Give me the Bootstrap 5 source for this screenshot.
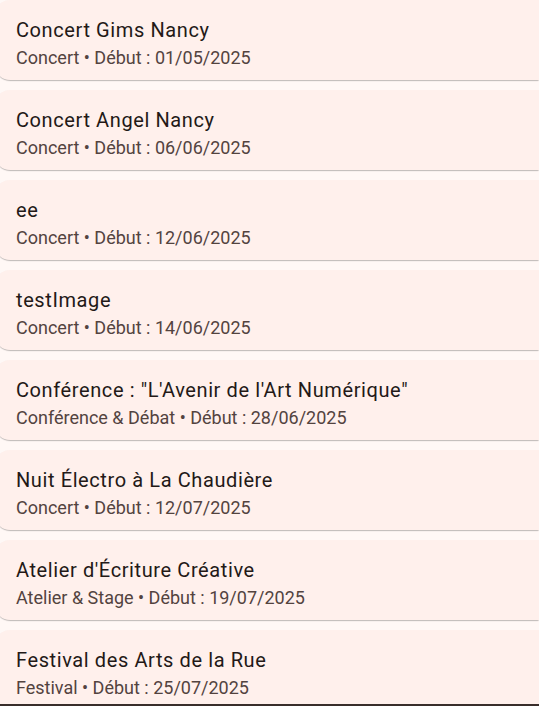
<!DOCTYPE html>
<html lang="fr">
<head>
<meta charset="utf-8">
<meta name="viewport" content="width=device-width, initial-scale=1">
<title>Événements</title>
<link href="https://cdn.jsdelivr.net/npm/bootstrap@5.3.0/dist/css/bootstrap.min.css" rel="stylesheet">
<style>
body { font-family: Roboto, sans-serif; background: #fff8f6; }
.events { height: 100vh; border-bottom: 2px solid #392e2b; }
.event-list { gap: 10px; }
.event { flex: none; margin-left: -5px; padding: 16px 16px 8px 21px; border-radius: 15px 0 0 15px; background: #fff0ec; box-shadow: 0 2px 1px -1px rgba(0,0,0,.12), 0 1px 1px rgba(0,0,0,.12), 0 1px 2px rgba(0,0,0,.04); }
.event-title { font-size: 20px; font-weight: 400; line-height: 28px; letter-spacing: .03em; font-kerning: normal; color: #231917; }
.event-info { font-size: 18px; line-height: 28px; color: #53433f; }
</style>
</head>
<body>
<main class="events overflow-hidden">
<ul class="event-list list-unstyled d-flex flex-column m-0">
<li class="event"><h2 class="event-title m-0">Concert Gims Nancy</h2><p class="event-info m-0">Concert • Début : 01/05/2025</p></li>
<li class="event"><h2 class="event-title m-0">Concert Angel Nancy</h2><p class="event-info m-0">Concert • Début : 06/06/2025</p></li>
<li class="event"><h2 class="event-title m-0">ee</h2><p class="event-info m-0">Concert • Début : 12/06/2025</p></li>
<li class="event"><h2 class="event-title m-0">testImage</h2><p class="event-info m-0">Concert • Début : 14/06/2025</p></li>
<li class="event"><h2 class="event-title m-0">Conférence : "L'Avenir de l'Art Numérique"</h2><p class="event-info m-0">Conférence &amp; Débat • Début : 28/06/2025</p></li>
<li class="event"><h2 class="event-title m-0">Nuit Électro à La Chaudière</h2><p class="event-info m-0">Concert • Début : 12/07/2025</p></li>
<li class="event"><h2 class="event-title m-0">Atelier d'Écriture Créative</h2><p class="event-info m-0">Atelier &amp; Stage • Début : 19/07/2025</p></li>
<li class="event"><h2 class="event-title m-0">Festival des Arts de la Rue</h2><p class="event-info m-0">Festival • Début : 25/07/2025</p></li>
</ul>
</main>
<script src="https://cdn.jsdelivr.net/npm/bootstrap@5.3.0/dist/js/bootstrap.bundle.min.js"></script>
</body>
</html>
